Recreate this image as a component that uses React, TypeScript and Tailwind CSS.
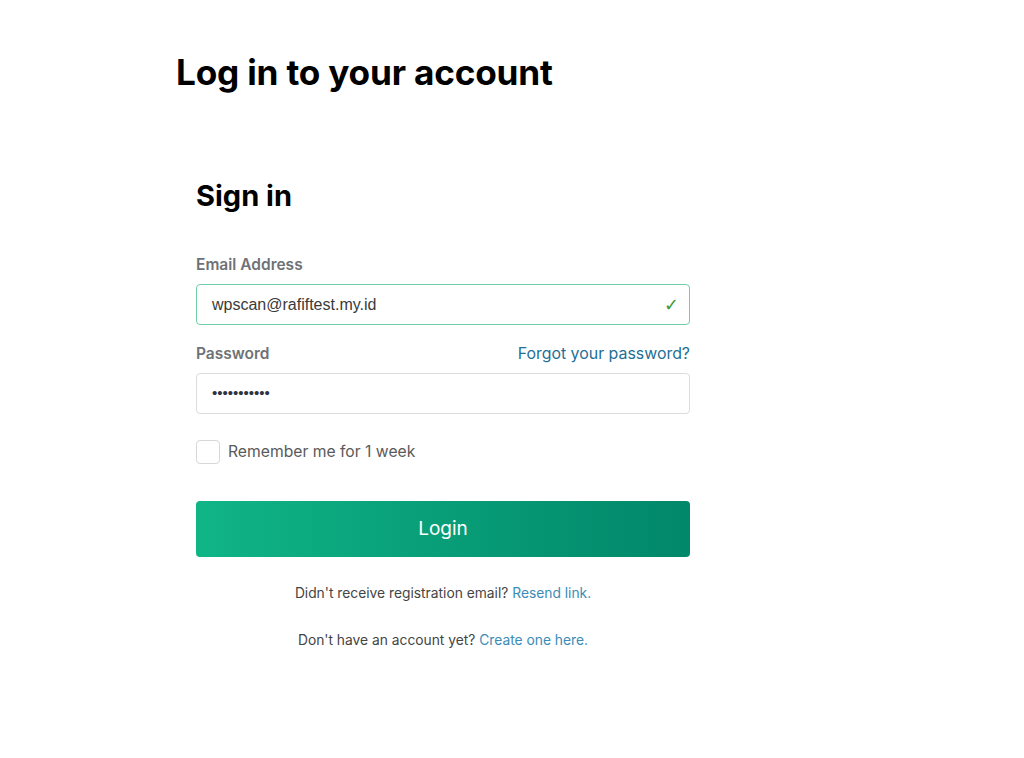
import React from "react";

const App = () => {
  return (
    <div className="min-h-screen bg-white font-['Inter',sans-serif] text-black">
      <div className="pl-[176px] pt-[50px]">
        <h1 className="text-[35.2px] font-bold leading-[44px] tracking-[-0.2px]">Log in to your account</h1>

        <div className="mt-[84px] ml-[20px] w-[494px]">
          <h2 className="text-[29px] font-bold leading-[36px]">Sign in</h2>

          <label className="mt-[41px] block text-[15.5px] font-semibold leading-[20px] text-[#6e7276]">Email Address</label>
          <div className="mt-[9px] flex h-[41px] items-center justify-between rounded-[4px] border border-[#6fcfa9] pl-[15px] pr-[10px]">
            <span className="font-['Liberation_Sans',Arial,sans-serif] text-[16px] text-[#3a3a3a]">wpscan@rafiftest.my.id</span>
            <span className="font-['DejaVu_Sans',sans-serif] text-[18px] text-[#3f9a2e]">✓</span>
          </div>

          <div className="mt-[19px] flex items-center justify-between leading-[20px]">
            <span className="text-[15.5px] font-semibold text-[#6e7276]">Password</span>
            <a className="text-[15.9px] text-[#1f6f95]">Forgot your password?</a>
          </div>
          <div className="mt-[9px] flex h-[41px] items-center rounded-[4px] border border-[#dcdcdc] px-[15px]">
            <span className="font-['Liberation_Sans',Arial,sans-serif] text-[15px] text-[#2b3440]">•••••••••••</span>
          </div>

          <div className="mt-[26px] flex items-center gap-[8px]">
            <div className="h-[24px] w-[24px] rounded-[4px] border border-[#d8d8d8] bg-white" />
            <span className="text-[15.7px] text-[#5a5a5a]">Remember me for 1 week</span>
          </div>

          <button className="mt-[37px] flex h-[56px] w-full items-center justify-center rounded-[4px] bg-gradient-to-r from-[#10b586] to-[#02876a] text-[19px] text-white">
            Login
          </button>

          <p className="mt-[26px] text-center text-[13.8px] leading-[20px] text-[#444]">
            Didn't receive registration email? <a className="text-[#3c8bb6]">Resend link.</a>
          </p>
          <p className="mt-[27px] text-center text-[13.8px] leading-[20px] text-[#444]">
            Don't have an account yet? <a className="text-[#3c8bb6]">Create one here.</a>
          </p>
        </div>
      </div>
    </div>
  );
};

export default App;
